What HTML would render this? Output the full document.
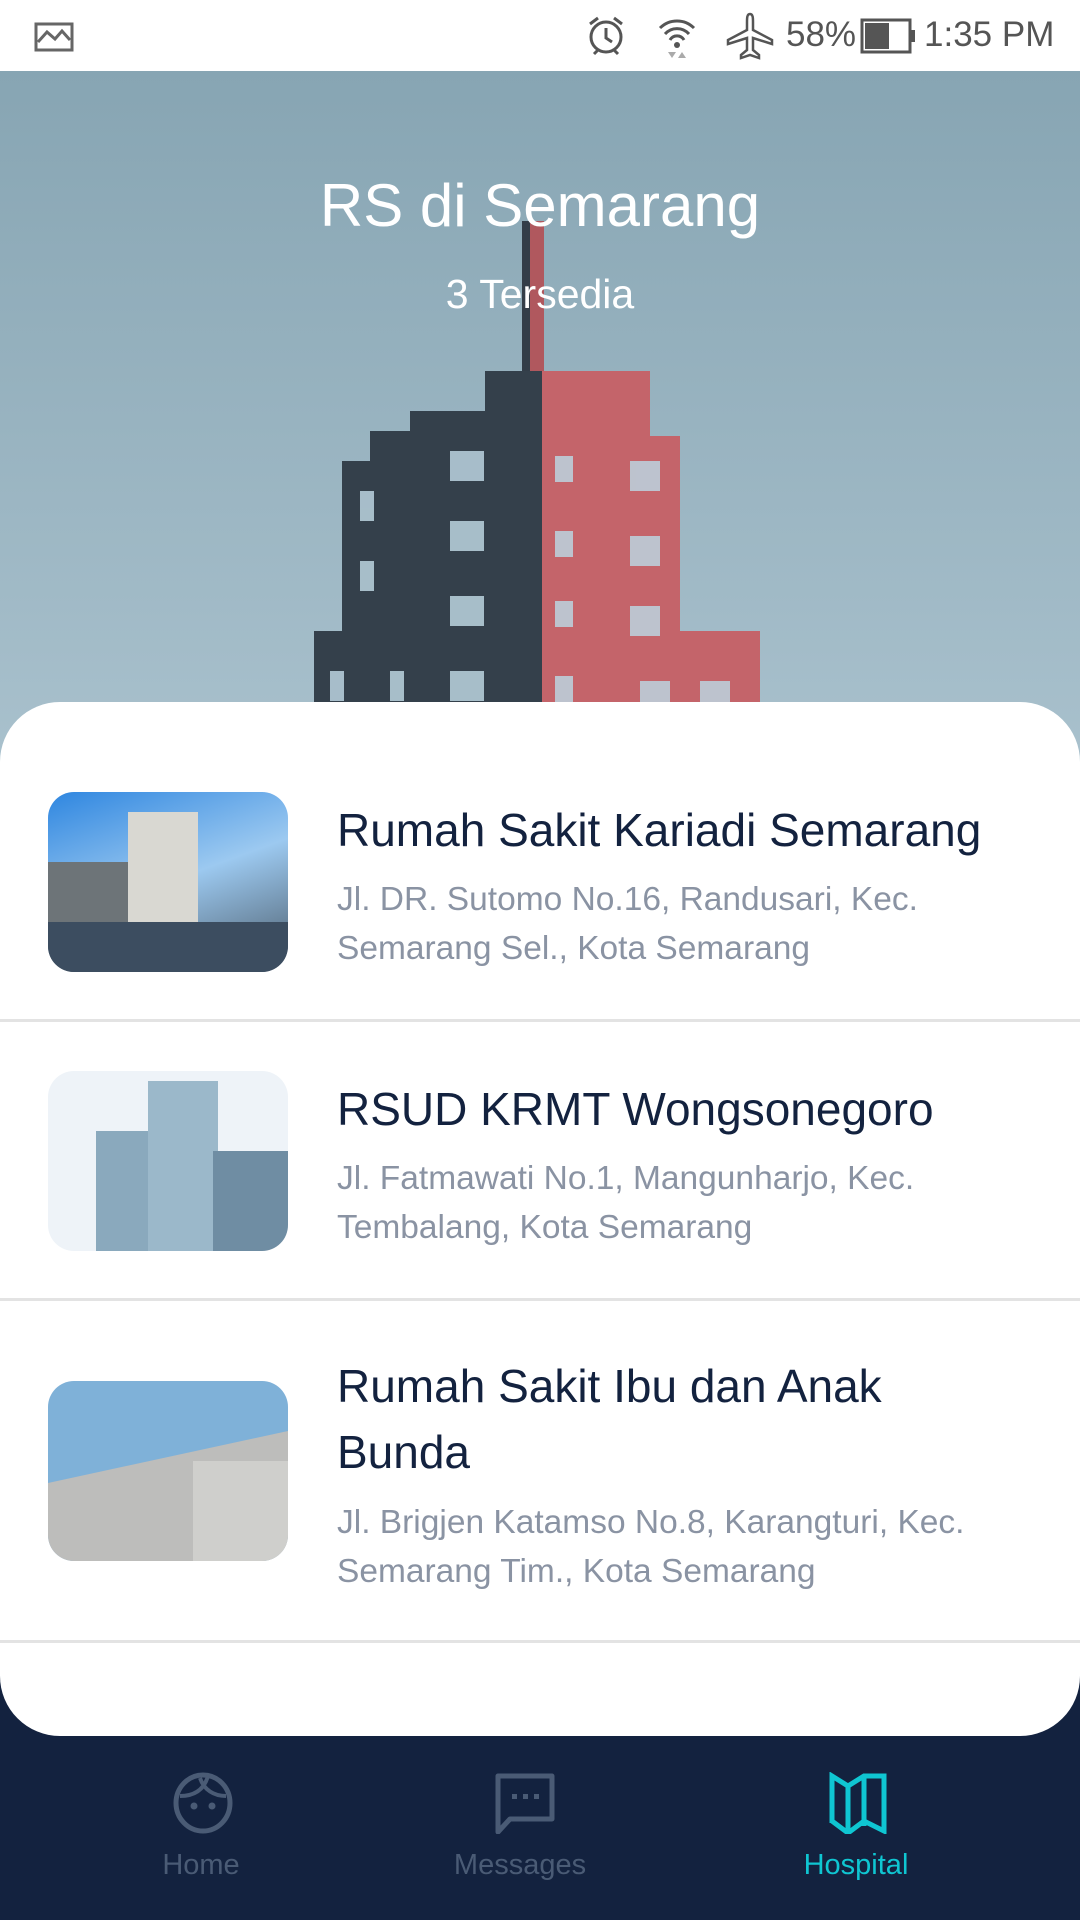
<!DOCTYPE html>
<html><head><meta charset="utf-8"><style>
*{margin:0;padding:0;box-sizing:border-box}
body{width:1080px;height:1920px;overflow:hidden;position:relative;font-family:"Liberation Sans",sans-serif;background:#13223f}
.abs{position:absolute}
#status{left:0;top:0;width:1080px;height:72px;background:#fff}
#hero{left:0;top:71px;width:1080px;height:700px;background:linear-gradient(#87a5b3,#a9c1cd);overflow:hidden}
.t{color:#fff;text-align:center;width:1080px;left:0}
#card{left:0;top:702px;width:1080px;height:1034px;background:#fff;border-radius:60px}
.img{left:48px;width:240px;height:180px;border-radius:26px;overflow:hidden}
.ti{left:337px;font-size:46px;color:#13223f;line-height:66px}
.ad{left:337px;font-size:33.5px;color:#8a93a3;line-height:49px}
.div{left:0;width:1080px;height:3px;background:#e3e3e3}
.lab{font-size:29px;color:#4a5b75;text-align:center;width:300px;top:1849px}
</style></head><body>
<div id="status" class="abs">
 <svg class="abs" style="left:34px;top:22px" width="40" height="30" viewBox="0 0 40 30"><rect x="2" y="2" width="36" height="26" fill="none" stroke="#666" stroke-width="3"/><path d="M4 20 L13 10 L21 17 L28 9 L36 18" fill="none" stroke="#666" stroke-width="3"/></svg>
 <svg class="abs" style="left:584px;top:14px" width="44" height="44" viewBox="0 0 44 44"><circle cx="22" cy="23" r="15" fill="none" stroke="#555" stroke-width="3"/><path d="M22 14v10l6 4M6 10l8-6M38 10l-8-6M10 40l4-4M34 40l-4-4" fill="none" stroke="#555" stroke-width="3"/></svg>
 <svg class="abs" style="left:656px;top:14px" width="42" height="46" viewBox="0 0 42 46"><path d="M4 14a24 24 0 0 1 34 0M9 20a16 16 0 0 1 24 0M14 26a8 8 0 0 1 14 0" fill="none" stroke="#555" stroke-width="3"/><circle cx="21" cy="31" r="3" fill="#555"/><path d="M12 38l4 6 4-6zM22 44l4-6 4 6z" fill="#aaa"/></svg>
 <svg class="abs" style="left:726px;top:12px" width="48" height="50" viewBox="0 0 48 50"><path d="M24 2c3 0 3 4 3 8v8l19 10v4l-19-6v12l6 5v3l-9-3-9 3v-3l6-5V26L2 32v-4l19-10v-8c0-4 0-8 3-8z" fill="none" stroke="#555" stroke-width="2.5"/></svg>
 <div class="abs" style="left:786px;top:15px;font-size:35px;color:#555">58%</div>
 <svg class="abs" style="left:860px;top:18px" width="56" height="36" viewBox="0 0 56 36"><rect x="2" y="2" width="48" height="32" fill="none" stroke="#555" stroke-width="3"/><rect x="5" y="5" width="24" height="26" fill="#555"/><rect x="50" y="12" width="5" height="12" fill="#555"/></svg>
 <div class="abs" style="left:924px;top:15px;font-size:35px;color:#555">1:35 PM</div>
</div>
<div id="hero" class="abs">
 <svg class="abs" style="left:300px;top:140px" width="480" height="560" viewBox="0 0 480 560">
  <rect x="222" y="10" width="22" height="150" fill="#b0585e"/>
  <rect x="222" y="10" width="8" height="150" fill="#333d48"/>
  <path d="M110 200 L185 200 L185 160 L242 160 L242 560 L14 560 L14 420 L42 420 L42 250 L70 250 L70 220 L110 220Z" fill="#34404b"/>
  <path d="M242 160 L350 160 L350 225 L380 225 L380 420 L460 420 L460 560 L242 560Z" fill="#c4646a"/>
  <g fill="#bcd4e0" opacity=".85">
   <rect x="150" y="240" width="34" height="30"/><rect x="150" y="310" width="34" height="30"/><rect x="150" y="385" width="34" height="30"/><rect x="150" y="460" width="34" height="30"/><rect x="150" y="520" width="34" height="30"/>
   <rect x="255" y="245" width="18" height="26"/><rect x="255" y="320" width="18" height="26"/><rect x="255" y="390" width="18" height="26"/><rect x="255" y="465" width="18" height="26"/>
   <rect x="330" y="250" width="30" height="30"/><rect x="330" y="325" width="30" height="30"/><rect x="330" y="395" width="30" height="30"/><rect x="340" y="470" width="30" height="30"/><rect x="400" y="470" width="30" height="30"/><rect x="400" y="520" width="30" height="30"/>
   <rect x="60" y="280" width="14" height="30"/><rect x="60" y="350" width="14" height="30"/><rect x="30" y="460" width="14" height="30"/><rect x="90" y="460" width="14" height="30"/>
  </g>
 </svg>
 <div class="abs t" style="top:100px;font-size:60px">RS di Semarang</div>
 <div class="abs t" style="top:200px;font-size:41px">3 Tersedia</div>
</div>
<div id="card" class="abs"></div>
<div class="abs img" style="top:792px;background:linear-gradient(160deg,#2e86e0,#9cc9f0 50%,#4a5a68)">
 <div class="abs" style="left:80px;top:20px;width:70px;height:140px;background:#d9d8d2"></div>
 <div class="abs" style="left:0;top:70px;width:80px;height:110px;background:#6d7478"></div>
 <div class="abs" style="left:0;top:130px;width:240px;height:50px;background:#3c4d60"></div>
</div>
<div class="abs ti" style="top:797px">Rumah Sakit Kariadi Semarang</div>
<div class="abs ad" style="top:875px">Jl. DR. Sutomo No.16, Randusari, Kec.<br>Semarang Sel., Kota Semarang</div>
<div class="abs div" style="top:1019px"></div>
<div class="abs img" style="top:1071px;background:#eef3f8">
 <div class="abs" style="left:48px;top:60px;width:120px;height:120px;background:#8aa9bd"></div>
 <div class="abs" style="left:100px;top:10px;width:70px;height:170px;background:#9bb8ca"></div>
 <div class="abs" style="left:165px;top:80px;width:75px;height:100px;background:#6f8da3"></div>
</div>
<div class="abs ti" style="top:1076px">RSUD KRMT Wongsonegoro</div>
<div class="abs ad" style="top:1154px">Jl. Fatmawati No.1, Mangunharjo, Kec.<br>Tembalang, Kota Semarang</div>
<div class="abs div" style="top:1298px"></div>
<div class="abs img" style="top:1381px;background:#7fb1d8">
 <div class="abs" style="left:0;top:50px;width:240px;height:130px;background:#bdbdbb;clip-path:polygon(0 40%,100% 0,100% 100%,0 100%)"></div>
 <div class="abs" style="left:145px;top:80px;width:95px;height:100px;background:#cfcfcc"></div>
</div>
<div class="abs ti" style="top:1353px">Rumah Sakit Ibu dan Anak<br>Bunda</div>
<div class="abs ad" style="top:1498px">Jl. Brigjen Katamso No.8, Karangturi, Kec.<br>Semarang Tim., Kota Semarang</div>
<div class="abs div" style="top:1640px"></div>
<svg class="abs" style="left:172px;top:1772px" width="62" height="62" viewBox="0 0 62 62"><ellipse cx="31" cy="31" rx="27" ry="28" fill="none" stroke="#4a5b75" stroke-width="5"/><path d="M8 24c14 0 24-6 28-20M28 6c4 12 14 18 26 18" fill="none" stroke="#4a5b75" stroke-width="4"/><circle cx="22" cy="34" r="3.5" fill="#4a5b75"/><circle cx="40" cy="34" r="3.5" fill="#4a5b75"/></svg>
<svg class="abs" style="left:494px;top:1772px" width="62" height="62" viewBox="0 0 62 62"><path d="M4 60V4h54v43H16z" fill="none" stroke="#4a5b75" stroke-width="5" stroke-linejoin="round"/><rect x="18" y="22" width="5" height="5" fill="#4a5b75"/><rect x="29" y="22" width="5" height="5" fill="#4a5b75"/><rect x="40" y="22" width="5" height="5" fill="#4a5b75"/></svg>
<svg class="abs" style="left:828px;top:1772px" width="62" height="62" viewBox="0 0 62 62"><path d="M4 4l16 10 16-10 20 0v55l-20-10-16 12-16-12z M20 14v45 M36 4v50 M4 4v47" fill="none" stroke="#0fc6d2" stroke-width="5" stroke-linejoin="miter"/></svg>
<div class="abs lab" style="left:51px">Home</div>
<div class="abs lab" style="left:370px">Messages</div>
<div class="abs lab" style="left:706px;color:#0fc6d2">Hospital</div>
</body></html>
